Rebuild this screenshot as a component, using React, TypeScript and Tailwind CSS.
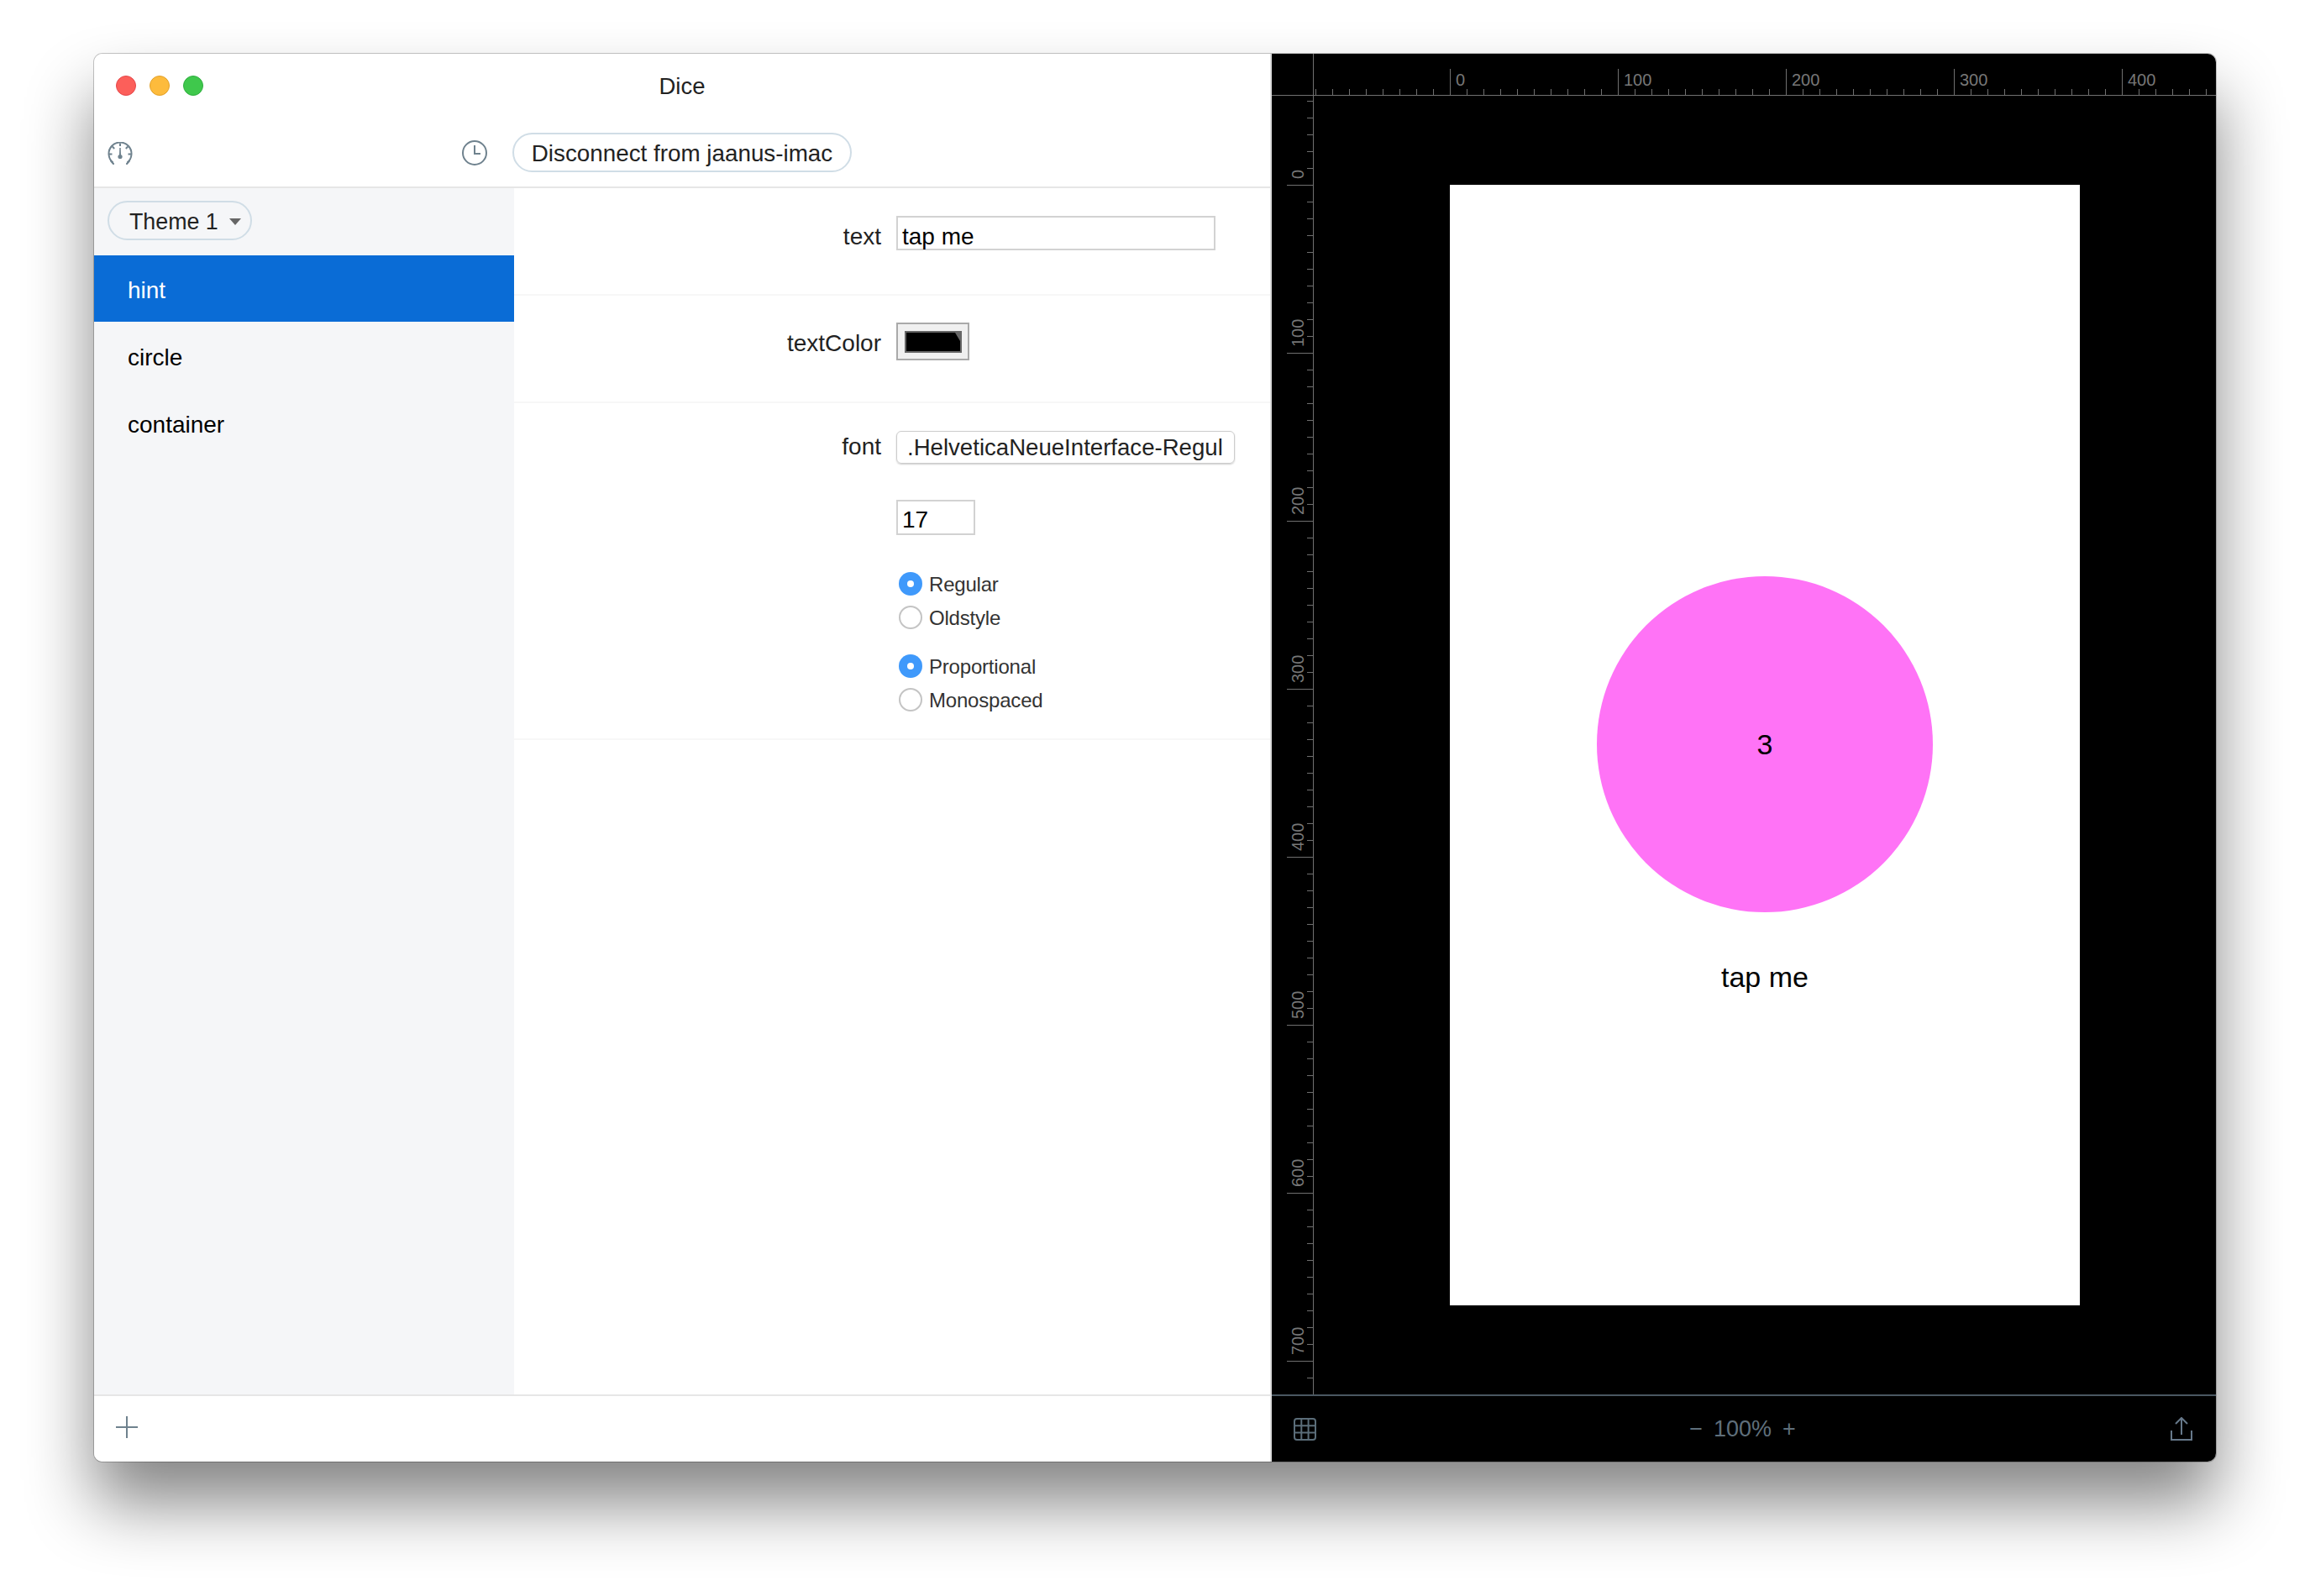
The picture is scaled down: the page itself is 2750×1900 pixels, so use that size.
const H_TICKS = Array.from({ length: 54 }, (_, i) => 52 + i * 20);
const V_TICKS = Array.from({ length: 77 }, (_, i) => 56 + i * 20);
const H_LABELS = [0, 100, 200, 300, 400];
const V_LABELS = [0, 100, 200, 300, 400, 500, 600, 700];

/* ─── Icons ─── */

function GaugeIcon() {
  return (
    <svg width="30" height="27" viewBox="0 0 30 27" fill="none" stroke="#6f828e" strokeWidth="2">
      <path d="M6.5 24.5 A13.5 13.5 0 1 1 23.5 24.5" />
      <path d="M4 22.5 L7 26 M26 22.5 L23 26" strokeLinecap="round" />
      <path d="M15 1.5 V5 M5.8 5.5 L8.2 8 M24.2 5.5 L21.8 8 M2 14.5 H5.5 M28 14.5 H24.5" />
      <path d="M14.4 17 L15 7 L15.6 17 Z" fill="#6f828e" strokeWidth="1" />
      <circle cx="15" cy="17.5" r="2.6" fill="#6f828e" stroke="none" />
    </svg>
  );
}

function ClockIcon() {
  return (
    <svg width="30" height="30" viewBox="0 0 30 30" fill="none" stroke="#6f828e" strokeWidth="2">
      <circle cx="15" cy="15" r="14" />
      <path d="M15 6 V16 H22" />
    </svg>
  );
}

function GridIcon() {
  return (
    <svg width="27" height="27" viewBox="0 0 27 27" fill="none" stroke="#5b6d79" strokeWidth="2">
      <rect x="1" y="1" width="25" height="25" rx="3" />
      <path d="M9.3 1 V26 M17.6 1 V26 M1 9.3 H26 M1 17.6 H26" />
    </svg>
  );
}

function ShareIcon() {
  return (
    <svg width="26" height="28" viewBox="0 0 26 28" fill="none" stroke="#66788a" strokeWidth="2">
      <path d="M1 16 V27 H25 V16" />
      <path d="M13 1 V21 M6 8 L13 1 L20 8" />
    </svg>
  );
}

function PlusIcon() {
  return (
    <svg width="26" height="26" viewBox="0 0 26 26" fill="none" stroke="#6f828e" strokeWidth="2">
      <path d="M13 0 V26 M0 13 H26" />
    </svg>
  );
}

/* ─── Pieces ─── */

function Light({ className }: { className: string }) {
  return <div className={`h-6 w-6 rounded-full border ${className}`} />;
}

function Radio({ label, checked }: { label: string; checked?: boolean }) {
  return (
    <div className="flex h-7 items-center">
      {checked ? (
        <div className="flex h-7 w-7 items-center justify-center rounded-full bg-[#3f99fb]">
          <div className="h-2 w-2 rounded-full bg-white" />
        </div>
      ) : (
        <div className="h-7 w-7 rounded-full border-2 border-[#c4c4c4] bg-white" />
      )}
      <span className="ml-[8px] pt-[2px] text-[24px] tracking-[-0.2px] text-[#333]">{label}</span>
    </div>
  );
}

function FormRow({ label, children, labelClass }: { label: string; children: React.ReactNode; labelClass: string }) {
  return (
    <div className="flex">
      <div className={`w-[437px] text-right text-[28px] text-[#222] ${labelClass}`}>{label}</div>
      <div className="ml-[18px]">{children}</div>
    </div>
  );
}

function Rulers() {
  return (
    <svg className="absolute left-0 top-0" width="1124" height="1596" fontFamily="Liberation Sans, Arial, sans-serif" fontSize="20" fill="#777">
      <path d="M0 49.5 H1124 M49.5 0 V1596" stroke="#707070" strokeWidth="1" />
      {H_TICKS.map((x) => (
        <line key={x} x1={x + 0.5} x2={x + 0.5} y1={(x - 212) % 200 === 0 ? 18 : 42} y2={49} stroke="#707070" strokeWidth="1" />
      ))}
      {V_TICKS.map((y) => (
        <line key={y} x1={(y - 156) % 200 === 0 ? 18 : 42} x2={49} y1={y + 0.5} y2={y + 0.5} stroke="#707070" strokeWidth="1" />
      ))}
      {H_LABELS.map((n, i) => (
        <text key={n} x={219 + i * 200} y={38}>
          {n}
        </text>
      ))}
      {V_LABELS.map((n, i) => {
        const y = 149 + i * 200;
        return (
          <text key={n} x={38} y={y} transform={`rotate(-90 38 ${y})`}>
            {n}
          </text>
        );
      })}
    </svg>
  );
}

/* ─── App ─── */

export default function App() {
  return (
    <div className="h-[1900px] w-[2750px] bg-white pl-[112px] pt-[64px] font-['Liberation_Sans',Arial,sans-serif]">
      <div className="flex h-[1676px] w-[2526px] overflow-hidden rounded-[10px] shadow-[0_0_0_1px_rgba(0,0,0,0.22),0_50px_80px_rgba(0,0,0,0.48)]">
        {/* Left pane */}
        <div className="flex w-[1402px] flex-col border-r-2 border-[#dcdcdc] bg-white">
          <div className="grid h-[76px] grid-cols-3 items-center">
            <div className="flex gap-4 pl-[26px]">
              <Light className="border-[#e5474a] bg-[#fc5f5a]" />
              <Light className="border-[#e2a12a] bg-[#fdbb3c]" />
              <Light className="border-[#2fae3f] bg-[#3fc84c]" />
            </div>
            <div className="pt-[2px] text-center text-[27.5px] text-[#222]">Dice</div>
          </div>
          <div className="flex h-[84px] items-start border-b-2 border-[#e6e6e6] pl-[16px]">
            <div className="mt-[29px]">
              <GaugeIcon />
            </div>
            <div className="ml-[392px] mt-[27px]">
              <ClockIcon />
            </div>
            <div className="ml-[30px] mt-[18px] flex h-[47px] w-[404px] items-center justify-center rounded-full border-2 border-[#d0dde6] pt-[2px] text-[27.8px] text-[#222]">
              Disconnect from jaanus-imac
            </div>
          </div>

          <div className="flex min-h-0 flex-1">
            {/* Sidebar */}
            <div className="w-[500px] bg-[#f5f6f8]">
              <div className="pl-4 pt-[15px]">
                <div className="flex h-[47px] w-[172px] items-center rounded-full border-2 border-[#d0dde6] pl-6 pt-[3px] text-[26.8px] text-[#222]">
                  Theme 1
                  <div className="ml-[13px] h-0 w-0 border-x-[7px] border-t-[8px] border-x-transparent border-t-[#666]" />
                </div>
              </div>
              <div className="mt-[18px] flex h-[79px] items-center bg-[#0a6cd6] pl-10 pt-1 text-[28px] text-white">hint</div>
              <div className="flex h-20 items-center pl-10 pt-[6px] text-[28px] text-black">circle</div>
              <div className="flex h-20 items-center pl-10 pt-[6px] text-[28px] text-black">container</div>
            </div>

            {/* Properties */}
            <div className="flex-1">
              <div className="h-[128px] border-b-2 border-[#f7f7f7] pt-[33px]">
                <FormRow label="text" labelClass="pt-1">
                  <div className="flex h-[41px] w-[380px] items-center border-2 border-[#d2d2d2] pl-[5px] pt-2 text-[28px] text-black">
                    tap me
                  </div>
                </FormRow>
              </div>
              <div className="h-[128px] border-b-2 border-[#f7f7f7] pt-[32px]">
                <FormRow label="textColor" labelClass="pt-1">
                  <div className="flex h-[45px] w-[87px] items-center justify-center border-2 border-[#aaa] bg-[#f0f0f0]">
                    <svg width="68" height="26" viewBox="0 0 68 26">
                      <rect width="68" height="26" fill="#666" />
                      <path d="M2 2 H60 L66 12 V24 H2 Z" fill="#000" />
                    </svg>
                  </div>
                </FormRow>
              </div>
              <div className="h-[401px] border-b-2 border-[#f7f7f7] pt-[33px]">
                <FormRow label="font" labelClass="-mt-[2px]">
                  <div className="flex h-[39px] w-[403px] items-center rounded-md border border-[#ccc] pl-[12px] text-[27.6px] text-[#222] shadow-[0_1px_2px_rgba(0,0,0,0.2)]">
                    .HelveticaNeueInterface-Regul
                  </div>
                  <div className="mt-[43px] flex h-[42px] w-[94px] items-center border-2 border-[#d2d2d2] pl-[5px] pt-[6px] text-[28px] text-black">
                    17
                  </div>
                  <div className="ml-[3px] mt-[44px] flex flex-col gap-3">
                    <Radio label="Regular" checked />
                    <Radio label="Oldstyle" />
                  </div>
                  <div className="ml-[3px] mt-[30px] flex flex-col gap-3">
                    <Radio label="Proportional" checked />
                    <Radio label="Monospaced" />
                  </div>
                </FormRow>
              </div>
            </div>
          </div>

          <div className="flex h-20 items-start border-t-2 border-[#e6e6e6] pl-[26px] pt-6">
            <PlusIcon />
          </div>
        </div>

        {/* Right pane */}
        <div className="flex flex-1 flex-col bg-black">
          <div className="relative min-h-0 flex-1 pl-[212px] pt-[156px]">
            <Rulers />
            <div className="flex h-[1334px] w-[750px] flex-col items-center bg-white pt-[466px] text-[34px] text-black">
              <div className="flex h-[400px] w-[400px] items-center justify-center rounded-full bg-[#ff73f6]">3</div>
              <div className="mt-[52px]">tap me</div>
            </div>
          </div>
          <div className="flex h-20 items-center justify-between border-t-2 border-[#4a5761] pl-[26px] pr-[28px] text-[#5f6f7b]">
            <GridIcon />
            <div className="flex items-center gap-[13px] pr-[2px] text-[27px] font-medium">
              <span>−</span>
              <span>100%</span>
              <span>+</span>
            </div>
            <ShareIcon />
          </div>
        </div>
      </div>
    </div>
  );
}
